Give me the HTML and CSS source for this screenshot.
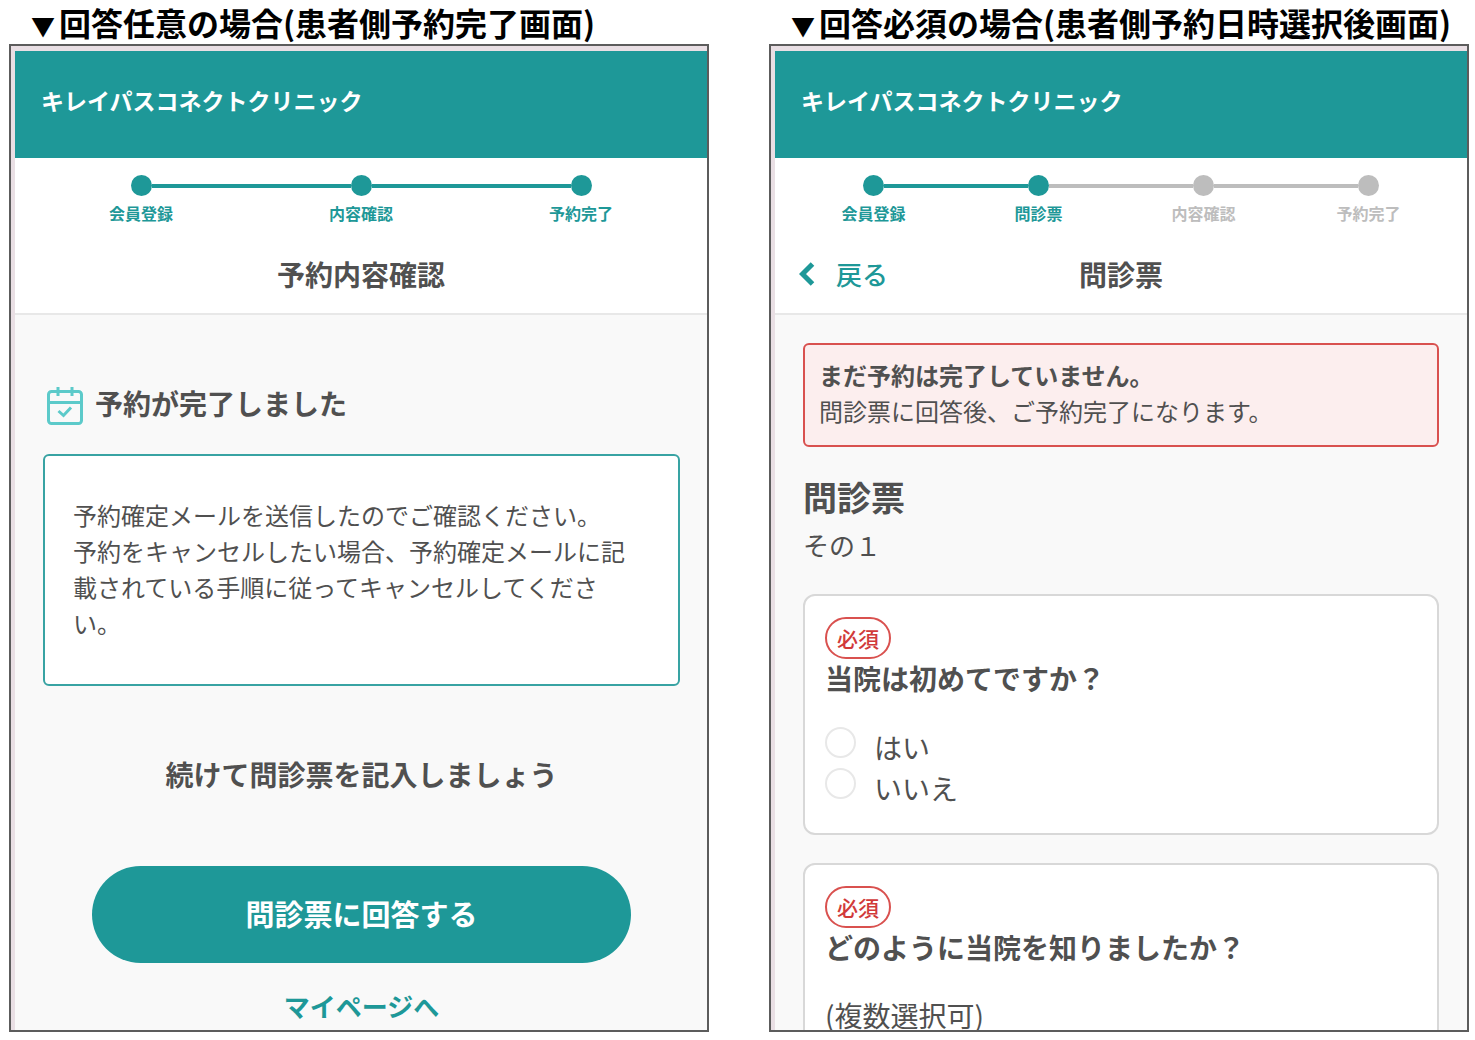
FILE: index.html
```html
<!DOCTYPE html>
<html lang="ja">
<head>
    <meta charset="UTF-8">
    <meta name="viewport" content="width=device-width, initial-scale=1.0">
    <title>キレイパスコネクトクリニック</title>
    <link rel="stylesheet" href="styles.css">
</head>
<body>
    <main class="compare">
        <!-- 回答任意 -->
        <section class="column">
            <h2 class="caption"><span class="mark">▼</span>回答任意の場合(患者側予約完了画面)</h2>
            <div class="screen">
                <header class="site-header">キレイパスコネクトクリニック</header>

                <div class="page-head">
                    <ol class="steps">
                        <li class="step done"><span class="marker"><span class="dot"></span></span>会員登録</li>
                        <li class="step done"><span class="marker"><span class="dot"></span></span>内容確認</li>
                        <li class="step done"><span class="marker"><span class="dot"></span></span>予約完了</li>
                    </ol>
                    <div class="title-bar">
                        <h1>予約内容確認</h1>
                    </div>
                </div>

                <div class="content complete">
                    <div class="complete-head">
                        <svg class="calendar" viewBox="0 0 36 40" aria-hidden="true">
                            <rect x="1.500" y="5.500" width="33" height="32" rx="3"/>
                            <path d="M2 16.500h32M11 1v9M25 1v9M11.500 25l5 4.500 7.500-8"/>
                        </svg>
                        <h2>予約が完了しました</h2>
                    </div>
                    <div class="info-box">
                        <p>予約確定メールを送信したのでご確認ください。</p>
                        <p>予約をキャンセルしたい場合、予約確定メールに記載されている手順に従ってキャンセルしてください。</p>
                    </div>
                    <p class="lead">続けて問診票を記入しましょう</p>
                    <button type="button" class="answer-button">問診票に回答する</button>
                    <a class="mypage-link" href="#">マイページへ</a>
                </div>
            </div>
        </section>

        <!-- 回答必須 -->
        <section class="column">
            <h2 class="caption"><span class="mark">▼</span>回答必須の場合(患者側予約日時選択後画面)</h2>
            <div class="screen">
                <header class="site-header">キレイパスコネクトクリニック</header>

                <div class="page-head">
                    <ol class="steps">
                        <li class="step done"><span class="marker"><span class="dot"></span></span>会員登録</li>
                        <li class="step done current"><span class="marker"><span class="dot"></span></span>問診票</li>
                        <li class="step"><span class="marker"><span class="dot"></span></span>内容確認</li>
                        <li class="step"><span class="marker"><span class="dot"></span></span>予約完了</li>
                    </ol>
                    <div class="title-bar">
                        <a class="back-link" href="#">
                            <svg class="chevron" viewBox="0 0 16 24" aria-hidden="true">
                                <path d="M13.500 2L3.500 12l10 10"/>
                            </svg>
                            <span>戻る</span>
                        </a>
                        <h1>問診票</h1>
                    </div>
                </div>

                <form class="content">
                    <div class="alert">
                        <p><strong>まだ予約は完了していません。</strong></p>
                        <p>問診票に回答後、ご予約完了になります。</p>
                    </div>
                    <h2 class="form-title">問診票</h2>
                    <p class="form-part">その１</p>

                    <div class="question" role="group" aria-labelledby="q1">
                        <span class="required">必須</span>
                        <h3 id="q1">当院は初めてですか？</h3>
                        <div class="option">
                            <input type="radio" name="first" id="first-yes">
                            <label for="first-yes">はい</label>
                        </div>
                        <div class="option">
                            <input type="radio" name="first" id="first-no">
                            <label for="first-no">いいえ</label>
                        </div>
                    </div>

                    <div class="question" role="group" aria-labelledby="q2">
                        <span class="required">必須</span>
                        <h3 id="q2">どのように当院を知りましたか？</h3>
                        <p class="note">(複数選択可)</p>
                    </div>
                </form>
            </div>
        </section>
    </main>
</body>
</html>
```

FILE: styles.css
```css
* {
    box-sizing: border-box;
}

body {
    margin: 0;
    background: #ffffff;
    color: #505050;
    font-family: "Noto Sans CJK JP", sans-serif;
    font-size: 24px;
    line-height: 36px;
}

h1, h2, h3, p, ol {
    margin: 0;
    padding: 0;
}

h1, h2, h3 {
    font-size: 28px;
    line-height: 40px;
}

a {
    text-decoration: none;
    color: #1e9898;
}

/* Two screens side by side */
.compare {
    display: flex;
    gap: 60px;
    height: 100vh;
    padding: 5px 6px 8px 9px;
}

.column {
    flex: 1;
    min-width: 0;
    display: flex;
    flex-direction: column;
}

.caption {
    padding: 0 0 5px 18px;
    color: #000000;
    font-size: 32px;
    line-height: 34px;
    white-space: nowrap;
}

.mark {
    padding: 0 4px;
    font-size: 24px;
    line-height: 24px;
}

.screen {
    flex: 1;
    min-height: 0;
    overflow: hidden;
    border: 2px solid #5c5c5c;
    background: #f9f9f9;
    box-shadow: inset 4px 5px 0 #e9dfe4;
    padding: 5px 0 0 4px;
}

/* Header */
.site-header {
    padding: 31px 26px 40px;
    background: #1e9898;
    color: #ffffff;
    font-size: 23px;
    font-weight: bold;
}

.page-head {
    background: #ffffff;
    border-bottom: 2px solid #e8e8e8;
}

/* Steps */
.steps {
    display: flex;
    padding: 17px 16px 0;
    list-style: none;
}

.step {
    flex: 1;
    text-align: center;
    color: #bdbdbd;
    font-size: 16px;
    font-weight: bold;
    line-height: 34px;
}

.step.done {
    color: #1e9898;
}

.marker {
    display: flex;
    align-items: center;
}

.marker::before,
.marker::after {
    content: "";
    flex: 1;
    height: 4px;
    background: currentColor;
}

.step:first-child .marker::before,
.step:last-child .marker::after {
    background: none;
}

.step.current .marker::after {
    background: #bdbdbd;
}

.dot {
    width: 21px;
    height: 21px;
    border-radius: 50%;
    background: currentColor;
}

.title-bar {
    display: grid;
    grid-template-columns: 1fr auto 1fr;
    padding: 24px 24px 19px;
}

.title-bar h1 {
    grid-column: 2;
}

.back-link {
    display: flex;
    align-items: center;
    gap: 21px;
    font-size: 26px;
    font-weight: 500;
    line-height: 36px;
}

.chevron {
    width: 16px;
    height: 24px;
    fill: none;
    stroke: #1e9898;
    stroke-width: 5;
}

.content {
    padding: 28px 28px 0;
}

/* Reservation complete */
.complete {
    display: flex;
    flex-direction: column;
    padding: 68px 27px 0 28px;
}

.complete-head {
    display: flex;
    align-items: flex-end;
    gap: 12px;
    padding-left: 4px;
}

.calendar {
    width: 36px;
    height: 40px;
    margin-bottom: -3px;
    fill: none;
    stroke: #5ccaca;
    stroke-width: 3;
}

.info-box {
    margin-top: 31px;
    padding: 41px 44px 43px 28px;
    background: #ffffff;
    border: 2px solid #38a3a3;
    border-radius: 6px;
}

.lead {
    margin-top: 70px;
    text-align: center;
    font-size: 28px;
    font-weight: bold;
}

.answer-button {
    margin: 74px 49px 0;
    padding: 27px 28px 30px;
    border: none;
    border-radius: 50px;
    background: #1e9898;
    color: #ffffff;
    font-family: inherit;
    font-size: 29px;
    font-weight: bold;
    line-height: 40px;
    cursor: pointer;
}

.mypage-link {
    margin-top: 25px;
    text-align: center;
    font-size: 26px;
    font-weight: bold;
}

/* Questionnaire */
.alert {
    padding: 12px 14px 16px;
    background: #fceeee;
    border: 2px solid #d9514f;
    border-radius: 6px;
}

.form-title {
    margin-top: 30px;
    font-size: 34px;
}

.form-part {
    margin-top: 10px;
    font-size: 26px;
}

.question {
    margin-top: 28px;
    padding: 21px 20px 24px;
    background: #ffffff;
    border: 2px solid #d8d8d8;
    border-radius: 12px;
}

.form-part + .question {
    margin-top: 31px;
}

.required {
    display: block;
    width: fit-content;
    padding: 0 10px;
    border: 2px solid #d9514f;
    border-radius: 21px;
    color: #d13a3a;
    font-size: 21px;
    font-weight: 500;
    line-height: 38px;
}

.question h3 {
    line-height: 38px;
}

.option {
    display: flex;
    align-items: flex-start;
    font-size: 28px;
    line-height: 41px;
}

.question h3 + .option {
    margin-top: 30px;
}

.option input {
    appearance: none;
    width: 31px;
    height: 31px;
    margin: 0 18px 0 0;
    border: 2px solid #e8e8e8;
    border-radius: 50%;
    background: #ffffff;
}

.option input:checked {
    border: 9px solid #1e9898;
}

.note {
    margin-top: 29px;
    font-size: 28px;
    line-height: 40px;
}
```
